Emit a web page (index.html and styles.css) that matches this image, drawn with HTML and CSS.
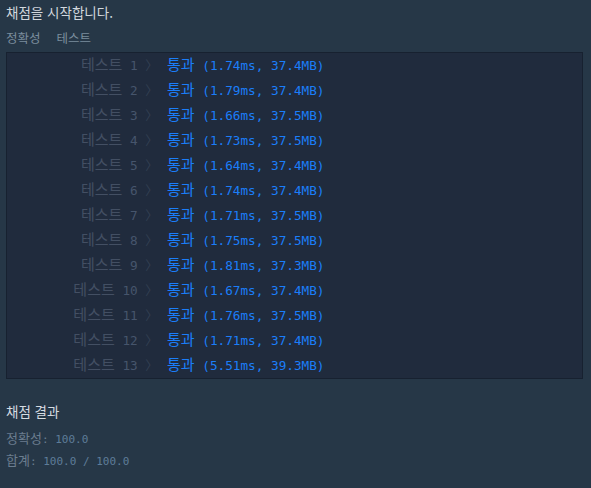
FILE: index.html
```html
<!DOCTYPE html>
<html lang="ko">
<head>
    <meta charset="UTF-8">
    <title>채점 결과</title>
    <link rel="stylesheet" href="styles.css">
</head>
<body>
    <div class="console">
        <p class="console-message">채점을 시작합니다.</p>

        <div class="console-heading">
            <span>정확성</span>
            <span>테스트</span>
        </div>

        <table class="console-test-group">
            <tbody id="testRows">
                <!-- rows come from the script below -->
            </tbody>
        </table>

        <h5 class="result-title">채점 결과</h5>
        <p class="result-line"><span class="ko">정확성</span>: <span class="result-value">100.0</span></p>
        <p class="result-line"><span class="ko">합계</span>: <span class="result-value">100.0 / 100.0</span></p>
    </div>

    <script>
        const results = [
            ['1.74ms', '37.4MB'],
            ['1.79ms', '37.4MB'],
            ['1.66ms', '37.5MB'],
            ['1.73ms', '37.5MB'],
            ['1.64ms', '37.4MB'],
            ['1.74ms', '37.4MB'],
            ['1.71ms', '37.5MB'],
            ['1.75ms', '37.5MB'],
            ['1.81ms', '37.3MB'],
            ['1.67ms', '37.4MB'],
            ['1.76ms', '37.5MB'],
            ['1.71ms', '37.4MB'],
            ['5.51ms', '39.3MB']
        ];

        document.getElementById('testRows').innerHTML = results.map((r, i) => `
            <tr>
                <td class="td-label"><span class="ko">테스트</span> <span class="test-no">${i + 1}</span> <span class="chevron">〉</span></td>
                <td class="result passed"><span class="ko">통과</span> (${r[0]}, ${r[1]})</td>
            </tr>
        `).join('');
    </script>
</body>
</html>
```

FILE: styles.css
```css
body {
    margin: 0;
    background-color: #263747;
    font-family: 'DejaVu Sans Mono', 'Noto Sans CJK KR', monospace;
}

.console {
    padding: 4px 8px 0 6px;
}

.ko {
    font-family: 'Noto Sans CJK KR', sans-serif;
    line-height: 1;
}

.console-message {
    margin: 0;
    font-family: 'Noto Sans CJK KR', sans-serif;
    font-size: 13.5px;
    line-height: 16px;
    color: #d2d8de;
}

.console-heading {
    margin: 10px 0 6px;
    font-family: 'Noto Sans CJK KR', sans-serif;
    font-size: 12.5px;
    line-height: 16px;
    color: #7b8d9d;
    display: flex;
    gap: 16px;
}

.console-test-group {
    width: 100%;
    border-collapse: collapse;
    background-color: #202b3d;
    border: 1px solid #172130;
    font-size: 12.7px;
}

.console-test-group td {
    height: 23px;
    padding: 0 0 2px;
    line-height: 16px;
    white-space: nowrap;
}

.console-test-group .ko {
    font-size: 15px;
}

.td-label {
    width: 151px;
    text-align: right;
    color: #434f63;
}

.test-no {
    color: #46556c;
}

.chevron {
    font-family: 'Noto Sans CJK KR', sans-serif;
    line-height: 1;
    color: #334053;
}

.console-test-group .result.passed {
    padding-left: 9px;
    color: #1b7ef9;
}

.result-title {
    margin: 23px 0 9px;
    font-family: 'Noto Sans CJK KR', sans-serif;
    font-size: 13.5px;
    font-weight: normal;
    line-height: 18px;
    color: #d5dbe1;
}

.result-line {
    margin: 0;
    font-size: 11px;
    line-height: 22px;
    color: #6b7d8f;
}

.result-line .ko {
    font-size: 13px;
}

.result-value {
    color: #5e7c99;
}
```
